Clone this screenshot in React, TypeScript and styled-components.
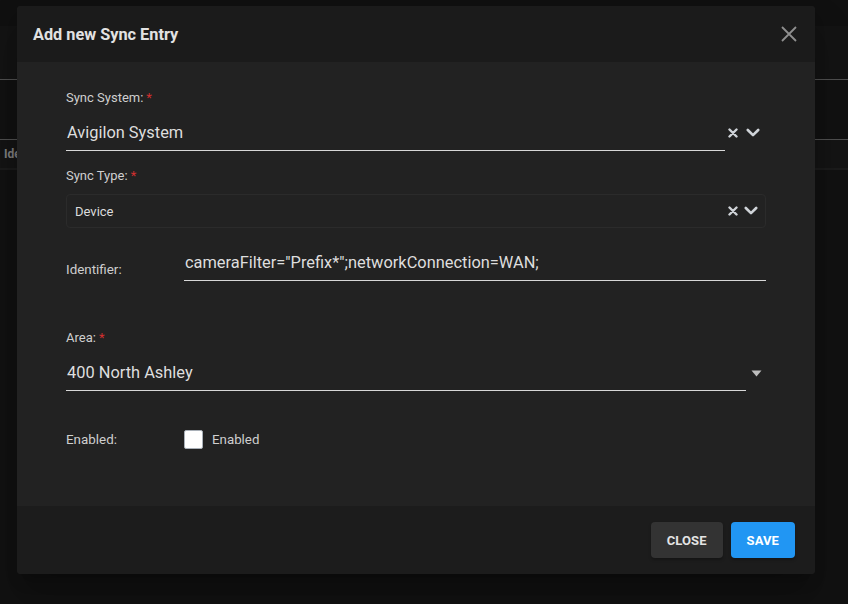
import React, { useState } from 'react'
import styled, { createGlobalStyle } from 'styled-components'

const GlobalStyle = createGlobalStyle`
  html, body {
    margin: 0;
    padding: 0;
    background: #111111;
    font-family: Roboto, "Liberation Sans", Arial, sans-serif;
  }
  #root {
    width: 848px;
    height: 604px;
    position: relative;
    overflow: hidden;
  }
`

// page behind the dialog (dimmed)
const Page = styled.div`
  display: flex;
  flex-direction: column;
  width: 848px;
  height: 604px;
  background: #111111;
`

const AppBar = styled.div`
  height: 26px;
  background: #101010;
`

const Toolbar = styled.div`
  height: 53px;
  background: #131313;
  border-bottom: 1px solid #4f4f4f;
`

const Spacer = styled.div`
  height: 59px;
`

const TableHead = styled.div`
  display: flex;
  align-items: center;
  height: 28px;
  padding-left: 4px;
  background: #141414;
  border-top: 1px solid #4f4f4f;
  border-bottom: 2px solid #1b1b1b;
  color: #7d7d7d;
  font-size: 12px;
  font-weight: 700;
`

const Backdrop = styled.div`
  position: absolute;
  inset: 0;
  display: flex;
  align-items: flex-start;
  padding: 6px 0 0 17px;
`

const Dialog = styled.div`
  display: flex;
  flex-direction: column;
  width: 798px;
  height: 568px;
  border-radius: 4px;
  overflow: hidden;
  background: #222222;
  box-shadow: 0 11px 15px -7px rgba(0, 0, 0, 0.3), 0 24px 38px 3px rgba(0, 0, 0, 0.2);
`

const Header = styled.div`
  display: flex;
  align-items: center;
  justify-content: space-between;
  height: 56px;
  padding: 0 18px 0 16px;
  background: #1b1b1b;
`

const Title = styled.h2`
  margin: 0;
  font-size: 16.3px;
  font-weight: 700;
  color: #e2e2e2;
`

const IconButton = styled.button`
  display: flex;
  padding: 0;
  margin-top: -1px;
  border: none;
  background: none;
  cursor: pointer;
`

const Body = styled.div`
  flex: 1;
  display: flex;
  flex-direction: column;
  padding: 28px 49px 0;
  background: #222222;
`

const Label = styled.label<{ $mt?: number }>`
  display: block;
  margin-top: ${({ $mt }) => $mt ?? 0}px;
  font-size: 13px;
  line-height: 16px;
  color: #cfcfcf;
`

const Required = styled.span`
  color: #d32f2f;
  margin-left: 3px;
`

const SelectRow = styled.div<{ $mt: number }>`
  display: flex;
  align-items: flex-end;
  margin-top: ${({ $mt }) => $mt}px;
`

const UnderlineValue = styled.div`
  flex: 1;
  padding: 6px 0 7px 1px;
  line-height: 20px;
  font-size: 16.4px;
  color: #dedede;
  border-bottom: 1px solid #d8d8d8;
`

const Adornment = styled.div<{ $w: number; $pr: number }>`
  display: flex;
  align-items: center;
  justify-content: flex-end;
  gap: 8px;
  width: ${({ $w }) => $w}px;
  height: 34px;
  padding: 0 ${({ $pr }) => $pr}px 2px 0;
  box-sizing: border-box;
`

const OutlinedSelect = styled.div`
  display: flex;
  align-items: center;
  justify-content: space-between;
  margin-top: 10px;
  height: 34px;
  box-sizing: border-box;
  padding: 0 7px 0 8px;
  border: 1px solid #2b2b2b;
  border-radius: 4px;
  font-size: 13px;
  color: #dcdcdc;
`

const Icons = styled.div`
  display: flex;
  align-items: center;
  gap: 6px;
`

const InlineRow = styled.div<{ $mt: number; $align?: string }>`
  display: flex;
  align-items: ${({ $align }) => $align ?? 'center'};
  margin-top: ${({ $mt }) => $mt}px;
`

const InlineLabel = styled.span<{ $mb?: number }>`
  width: 118px;
  flex-shrink: 0;
  margin-bottom: ${({ $mb }) => $mb ?? 0}px;
  font-size: 13.4px;
  line-height: 16px;
  color: #cfcfcf;
`

const TextInput = styled.input`
  flex: 1;
  height: 33px;
  box-sizing: border-box;
  padding: 2px 0 6px 1px;
  border: none;
  border-bottom: 1px solid #d8d8d8;
  background: transparent;
  outline: none;
  font-family: inherit;
  font-size: 16.4px;
  color: #dedede;
`

const CheckBox = styled.span<{ $checked: boolean }>`
  width: 19px;
  height: 19px;
  box-sizing: border-box;
  border: 1px solid #a9b0b8;
  border-radius: 2px;
  background: ${({ $checked }) => ($checked ? '#2196f3' : '#ffffff')};
`

const CheckLabel = styled.label`
  display: flex;
  align-items: center;
  gap: 9px;
  font-size: 13.3px;
  color: #cfcfcf;
  cursor: pointer;
`

const Footer = styled.div`
  display: flex;
  justify-content: flex-end;
  align-items: flex-start;
  gap: 8px;
  height: 68px;
  box-sizing: border-box;
  padding: 16px 20px 0 0;
  background: #1c1c1c;
`

const Button = styled.button<{ $primary?: boolean }>`
  height: 36px;
  padding: 0 16px;
  min-width: 64px;
  border: none;
  border-radius: 4px;
  font-family: inherit;
  font-size: 13px;
  font-weight: 700;
  letter-spacing: 0.1px;
  color: ${({ $primary }) => ($primary ? '#ffffff' : '#e4e4e4')};
  background: ${({ $primary }) => ($primary ? '#2196f3' : '#333333')};
  box-shadow: 0 2px 3px rgba(0, 0, 0, 0.25);
  cursor: pointer;
`

const ClearIcon = ({ size = 10 }: { size?: number }) => (
  <svg width={size} height={size} viewBox="0 0 10 10">
    <path d="M1.5 1.5 L8.5 8.5 M8.5 1.5 L1.5 8.5" stroke="#cfd3d8" strokeWidth="2.4" strokeLinecap="round" />
  </svg>
)

const ChevronIcon = () => (
  <svg width="14" height="10" viewBox="0 0 14 10">
    <path d="M1.8 2 L7 7.2 L12.2 2" stroke="#cfd3d8" strokeWidth="2.6" fill="none" strokeLinecap="round" strokeLinejoin="round" />
  </svg>
)

const CaretIcon = () => (
  <svg width="11" height="7" viewBox="0 0 11 7">
    <path d="M0.5 0.5 H10.5 L5.5 6.5 Z" fill="#bdbdbd" />
  </svg>
)

const CloseIcon = () => (
  <svg width="16" height="16" viewBox="0 0 16 16">
    <path d="M1 1 L15 15 M15 1 L1 15" stroke="#8f8f8f" strokeWidth="1.8" />
  </svg>
)

export default function App() {
  const [identifier, setIdentifier] = useState('cameraFilter="Prefix*";networkConnection=WAN;')
  const [enabled, setEnabled] = useState(false)

  return (
    <>
      <GlobalStyle />
      <Page>
        <AppBar />
        <Toolbar />
        <Spacer />
        <TableHead>Identifier</TableHead>
      </Page>
      <Backdrop>
        <Dialog>
          <Header>
            <Title>Add new Sync Entry</Title>
            <IconButton aria-label="close">
              <CloseIcon />
            </IconButton>
          </Header>

          <Body>
            <Label>
              Sync System:<Required>*</Required>
            </Label>
            <SelectRow $mt={11}>
              <UnderlineValue>Avigilon System</UnderlineValue>
              <Adornment $w={41} $pr={6}>
                <ClearIcon />
                <ChevronIcon />
              </Adornment>
            </SelectRow>

            <Label $mt={17}>
              Sync Type:<Required>*</Required>
            </Label>
            <OutlinedSelect>
              <span>Device</span>
              <Icons>
                <ClearIcon />
                <ChevronIcon />
              </Icons>
            </OutlinedSelect>

            <InlineRow $mt={20} $align="flex-end">
              <InlineLabel $mb={3}>Identifier:</InlineLabel>
              <TextInput value={identifier} onChange={(e) => setIdentifier(e.target.value)} />
            </InlineRow>

            <Label $mt={49}>
              Area:<Required>*</Required>
            </Label>
            <SelectRow $mt={11}>
              <UnderlineValue>400 North Ashley</UnderlineValue>
              <Adornment $w={20} $pr={4}>
                <CaretIcon />
              </Adornment>
            </SelectRow>

            <InlineRow $mt={39}>
              <InlineLabel>Enabled:</InlineLabel>
              <CheckLabel onClick={() => setEnabled(!enabled)}>
                <CheckBox $checked={enabled} />
                Enabled
              </CheckLabel>
            </InlineRow>
          </Body>

          <Footer>
            <Button>CLOSE</Button>
            <Button $primary>SAVE</Button>
          </Footer>
        </Dialog>
      </Backdrop>
    </>
  )
}
